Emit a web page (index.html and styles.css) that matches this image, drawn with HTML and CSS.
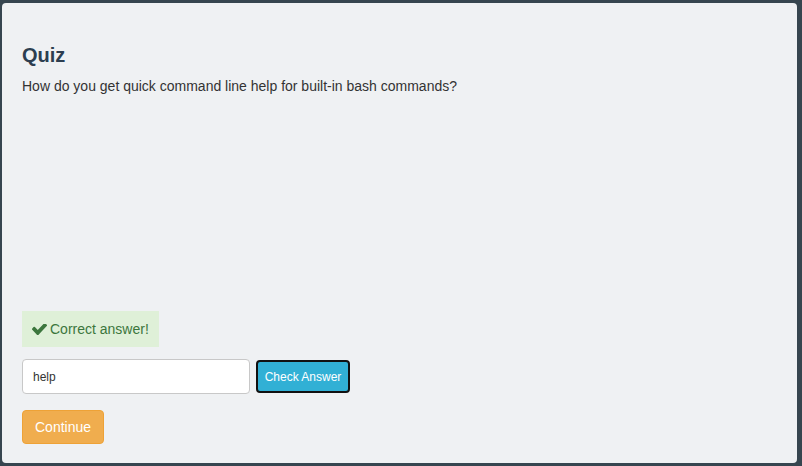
FILE: index.html
```html
<!DOCTYPE html>
<html>
<head>
<meta charset="utf-8">
<link rel="stylesheet" href="styles.css">
</head>
<body>
<div class="panel">
  <div class="top">
    <h2 class="title">Quiz</h2>
    <p class="question">How do you get quick command line help for built-in bash commands?</p>
  </div>
  <div class="spacer"></div>
  <div class="bottom">
    <div class="alert"><svg class="check" viewBox="121 430 1550 1064" width="15" height="11" preserveAspectRatio="none"><path fill="#3c763d" d="M1671 566q0 40-28 68l-724 724-136 136q-28 28-68 28t-68-28l-136-136-362-362q-28-28-28-68t28-68l136-136q28-28 68-28t68 28l294 295 656-657q28-28 68-28t68 28l136 136q28 28 28 68z"/></svg> Correct answer!</div>
    <div class="row">
      <input class="answer" type="text" value="help">
      <button class="btn-check">Check Answer</button>
    </div>
    <button class="btn-continue">Continue</button>
  </div>
</div>
</body>
</html>
```
FILE: styles.css
```css
html, body {
  margin: 0;
  padding: 0;
  height: 100%;
}
body {
  background: #36454f;
  font-family: "Liberation Sans", Arial, sans-serif;
  padding: 3px 5px 3px 2px;
  box-sizing: border-box;
}
.panel {
  background: #eff1f3;
  border-radius: 4px;
  height: 460px;
  box-sizing: border-box;
  padding: 0 20px 19px;
  display: flex;
  flex-direction: column;
}
.top {
  margin-top: 41px;
}
.title {
  margin: 0;
  font-size: 20px;
  line-height: 22px;
  font-weight: bold;
  color: #2c3e50;
}
.question {
  margin: 10px 0 0;
  font-size: 14px;
  line-height: 20px;
  color: #333;
}
.spacer {
  flex: 1;
}
.bottom {
  display: flex;
  flex-direction: column;
  align-items: flex-start;
}
.alert {
  background: #dff0d8;
  color: #3c763d;
  font-size: 14px;
  line-height: 20px;
  padding: 8px 10px;
  display: flex;
  align-items: center;
}
.check {
  margin-right: 3px;
}
.row {
  display: flex;
  align-items: center;
  margin-top: 12px;
}
.answer {
  width: 228px;
  height: 35px;
  box-sizing: border-box;
  border: 1px solid #c8c8c8;
  border-radius: 4px;
  background: #fff;
  padding: 0 10px;
  font-family: "Liberation Sans", Arial, sans-serif;
  font-size: 12px;
  color: #333;
  outline: none;
}
.btn-check {
  margin-left: 6px;
  width: 94px;
  height: 33px;
  box-sizing: border-box;
  background: #31b0d5;
  border: 2px solid #111;
  border-radius: 4px;
  color: #fff;
  font-family: "Liberation Sans", Arial, sans-serif;
  font-size: 12px;
  padding: 0;
}
.btn-continue {
  margin-top: 16px;
  height: 34px;
  box-sizing: border-box;
  background: #f0ad4e;
  border: 1px solid #eea236;
  border-radius: 4px;
  color: #fff;
  font-family: "Liberation Sans", Arial, sans-serif;
  font-size: 14px;
  line-height: 20px;
  padding: 6px 12px;
}
```
